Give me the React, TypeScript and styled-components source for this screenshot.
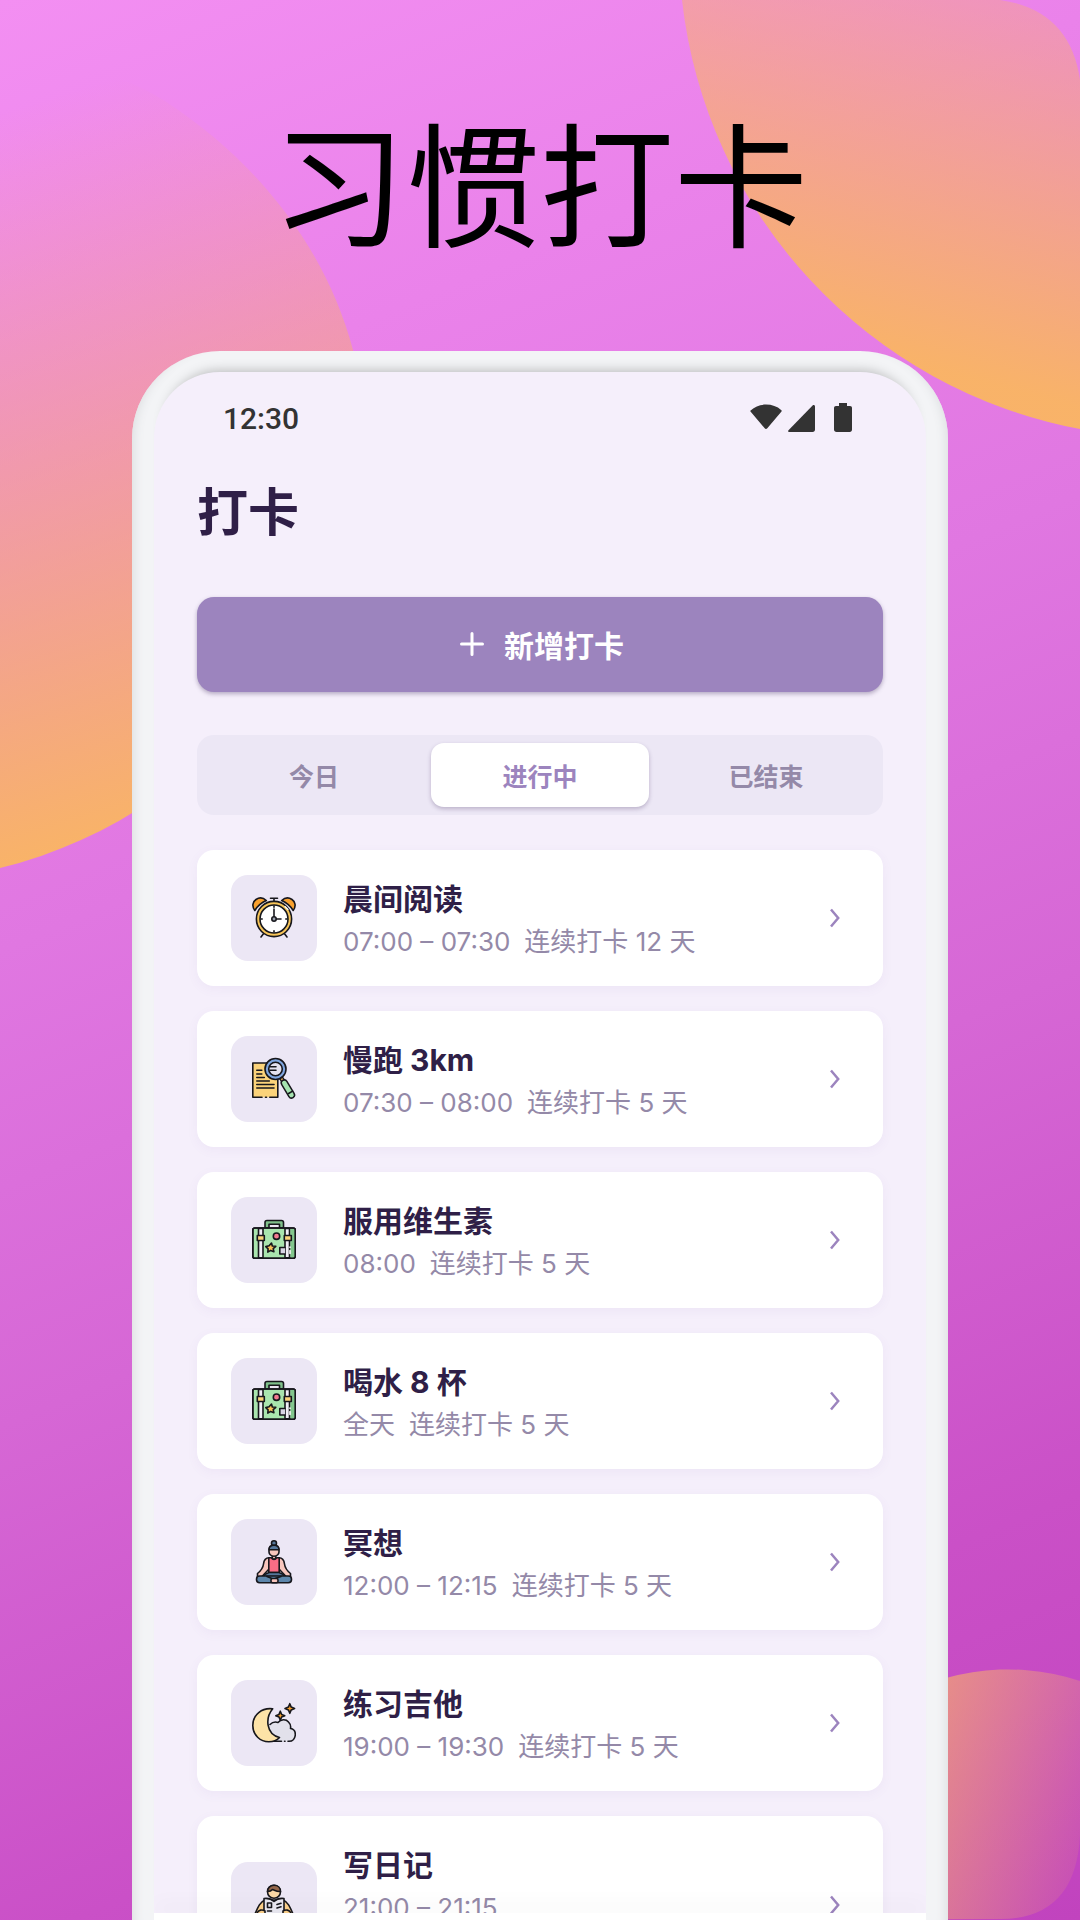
import React from "react";
import styled, { createGlobalStyle } from "styled-components";

const GlobalStyle = createGlobalStyle`
  * { box-sizing: border-box; }
  body {
    margin: 0;
    font-family: Inter, "Noto Sans CJK SC", sans-serif;
    color: #2f1f47;
  }
  button { font: inherit; border: 0; cursor: pointer; }
`;

const Page = styled.div`
  position: relative;
  height: 100vh;
  overflow: hidden;
  display: flex;
  flex-direction: column;
  align-items: center;
  background: linear-gradient(157deg, #f38ff2 0%, #ea82ea 20%, #e077e1 40%, #d667d5 60%, #ca50c7 82%, #c143be 100%);
`;

const Backdrop = styled.svg`
  position: absolute;
  inset: 0;
  width: 100%;
  height: 100%;
`;

const Headline = styled.h1`
  position: relative;
  margin: 0;
  padding: 99px 0 92px;
  font-family: "Noto Sans CJK SC", sans-serif;
  font-size: 134px;
  line-height: 160px;
  font-weight: 400;
  color: #000;
`;

const Phone = styled.div`
  position: relative;
  flex: 1;
  min-height: 0;
  width: 816px;
  max-width: 94%;
  padding: 21px 22px 0;
  display: flex;
  border-radius: 88px 88px 0 0;
  background: #f3f4f6;
  box-shadow: inset 12px 0 10px -9px #dfe1e3, inset -12px 0 10px -9px #dfe1e3;
`;

const Screen = styled.main`
  flex: 1;
  min-width: 0;
  display: flex;
  flex-direction: column;
  border-radius: 66px 66px 0 0;
  background: #f5effb;
  box-shadow: 0 -12px 12px -11px rgba(0, 0, 0, 0.25);
`;

const StatusBar = styled.div`
  flex: none;
  display: flex;
  align-items: center;
  justify-content: space-between;
  height: 94px;
  padding: 0 74px 2px 69px;
  font-family: Roboto, sans-serif;
  font-size: 30px;
  font-weight: 500;
  color: #333;
`;

const Content = styled.div`
  flex: 1;
  min-height: 0;
  overflow: hidden;
  padding: 13px 43px 0;
  display: flex;
  flex-direction: column;
`;

const Title = styled.h2`
  margin: 0 0 58px;
  font-family: "Noto Sans CJK SC", sans-serif;
  font-size: 51px;
  line-height: 60px;
  font-weight: 700;
`;

const AddButton = styled.button`
  flex: none;
  display: flex;
  align-items: center;
  justify-content: center;
  gap: 20px;
  height: 95px;
  padding: 0 0 2px 4px;
  margin-bottom: 43px;
  border-radius: 17px;
  background: #9c84be;
  color: #fff;
  font-size: 30px;
  font-weight: 700;
  box-shadow: 0 2px 4px rgba(60, 40, 90, 0.35);
`;

const Tabs = styled.div`
  flex: none;
  display: grid;
  grid-template-columns: repeat(3, 1fr);
  gap: 8px;
  height: 80px;
  padding: 8px;
  margin-bottom: 35px;
  border-radius: 17px;
  background: #ece7f5;
`;

const Tab = styled.button<{ $active?: boolean }>`
  padding: 0;
  border-radius: 13px;
  font-size: 25px;
  font-weight: 700;
  color: ${(p) => (p.$active ? "#9c84be" : "#9489a8")};
  background: ${(p) => (p.$active ? "#fff" : "transparent")};
  box-shadow: ${(p) => (p.$active ? "0 2px 4px rgba(60, 40, 90, 0.28)" : "none")};
`;

const List = styled.ul`
  margin: 0;
  padding: 0;
  list-style: none;
  display: flex;
  flex-direction: column;
  gap: 25px;
`;

const Card = styled.li<{ $tall?: boolean }>`
  flex: none;
  display: flex;
  align-items: center;
  height: ${(p) => (p.$tall ? 178 : 136)}px;
  padding: 0 43px 0 34px;
  border-radius: 17px;
  background: #fff;
  box-shadow: 0 3px 12px rgba(120, 90, 170, 0.06);
`;

const IconTile = styled.div`
  flex: none;
  display: flex;
  align-items: center;
  justify-content: center;
  width: 86px;
  height: 86px;
  margin-right: 26px;
  border-radius: 17px;
  background: #ece7f5;
`;

const Info = styled.div`
  flex: 1;
  min-width: 0;
  align-self: flex-start;
  padding-top: 28px;
`;

const Name = styled.h3`
  margin: 0;
  font-size: 30px;
  line-height: 42px;
  font-weight: 700;
`;

const Meta = styled.p`
  margin: 0;
  display: flex;
  gap: 14px;
  font-size: 26px;
  line-height: 44px;
  color: #9489a8;
`;

const BottomNav = styled.nav`
  position: relative;
  flex: none;
  height: 7px;
  background: #fff;
  box-shadow: 0 -8px 20px rgba(0, 0, 0, 0.05);
  clip-path: inset(-40px 0 0 0);
`;

const StatusIcons = () => (
  <svg width="102" height="30" viewBox="0 0 102 30" fill="#333" aria-hidden="true">
    <path d="M.6 7.400C5 3.400 10 1.600 16 1.600s11 1.800 15.400 5.600c.4.400.4.900.1 1.300L17.300 25.300c-.8.900-1.900.9-2.600 0L.5 8.600c-.3-.4-.3-.9.1-1.200z" />
    <path d="M38.500 27.200 62.600 2.500c.9-.9 2.400-.4 2.400 1V26.500c0 1.500-.9 2.500-2.400 2.500H39.400c-1.200 0-1.600-1-.9-1.800z" />
    <path d="M89 0h8v3h3c1.300 0 2 .8 2 2v21.500c0 1.500-.8 2.500-2.300 2.500H86.600c-1.600 0-2.600-1-2.600-2.500V5c0-1.200.8-2 2-2h3z" />
  </svg>
);

const PlusIcon = () => (
  <svg width="24" height="24" viewBox="0 0 24 24" fill="none" stroke="#fff" strokeWidth="3" strokeLinecap="round" aria-hidden="true">
    <path d="M12 1.500v21M1.500 12h21" />
  </svg>
);

const Chevron = () => (
  <svg width="10" height="20" viewBox="0 0 10 20" fill="none" stroke="#9c84be" strokeWidth="2.500" aria-hidden="true">
    <path d="M1 1.500 8.200 10 1 18.500" />
  </svg>
);

const Drawing = ({ children }: { children: React.ReactNode }) => (
  <svg width="44" height="44" viewBox="0 0 44 44" fill="none" stroke="#17171c" strokeWidth="1.600" strokeLinecap="round" strokeLinejoin="round" aria-hidden="true">
    {children}
  </svg>
);

const ClockArt = () => (
  <Drawing>
    <path d="M2.800 14.500C-.6 10 1 5.500 4 3.500 7.300 1.300 11.400 1.800 14.300 4.600 9.600 6.600 5.800 9.800 2.800 14.500z" fill="#f9a12e" />
    <path d="M41.200 14.500C44.600 10 43 5.500 40 3.500 36.700 1.300 32.600 1.800 29.700 4.600c4.700 2 8.500 5.200 11.500 9.900z" fill="#f9a12e" />
    <path d="M18.500 2.300h7M22 2.300v3M11.300 38l-2.300 3M32.700 38l2.300 3" />
    <circle cx="22" cy="23" r="17.600" fill="#f7c559" />
    <circle cx="22" cy="23" r="14" fill="#fff" />
    <path d="M22 20.500v-7.500M24.500 23H29M22 10v1.200M22 34.800V36M9 23h1.200M33.800 23H35" />
    <circle cx="22" cy="23" r="2.200" fill="#9aa0ad" />
    <path d="M33 10.500l3 3" stroke="#fff" strokeWidth="1.200" />
  </Drawing>
);

const SearchArt = () => (
  <Drawing>
    <path d="M.8 6h25v34.300h-25z" fill="#fbd37a" stroke="none" />
    <path d="M10 40.300H.8V6h25v34.300h-8M13.500 40.300h1" />
    <path d="M4.800 13.300h5M4.800 17h5M4.800 20.500h7.500M4.800 24h12.500M4.800 27.500H22M4.800 31H22" />
    <path d="M28.500 20l3 4.500" strokeWidth="4.500" />
    <path d="M28.800 20.500l2.500 3.800" stroke="#d9a253" strokeWidth="2" />
    <path d="M32.300 26l7.200 12" strokeWidth="7.500" />
    <path d="M32.300 26l7.200 12" stroke="#a5e3b0" strokeWidth="4.500" />
    <path d="M36.600 36.500l4-2.400" />
    <circle cx="23.500" cy="12" r="10.500" fill="#7fa6df" />
    <circle cx="23.500" cy="12" r="6.800" fill="#e4e2ef" />
    <path d="M18 9.800h6M18 13.300h6" />
  </Drawing>
);

const SuitcaseArt = () => (
  <Drawing>
    <path d="M13 10V4.500c0-1.200.7-2 2-2h14.500c1.200 0 2 .8 2 2V10h-4V6.300H17V10z" fill="#7fbf8a" />
    <rect x=".8" y="10" width="42.400" height="30.200" rx="2" fill="#a9e5ae" />
    <path d="M6.500 10.500v29.200h4.500V10.500zM33 10.500v29.200h4.500V10.500z" fill="#f1eff7" />
    <path d="M39 11v28.500h4V11z" fill="#83c78d" stroke="none" />
    <rect x=".8" y="10" width="42.400" height="30.200" rx="2" />
    <rect x="5.300" y="17.500" width="7" height="5" fill="#fbd37a" />
    <rect x="32.300" y="17.500" width="7" height="5" fill="#fbd37a" />
    <circle cx="24.500" cy="18.200" r="3.200" fill="#f4798f" />
    <path d="M19.500 25l.8 3 3.500.3-2.600 2.300.7 3.100-3.200-1.300-2.900 1.700.3-3.300-2.300-2.200 3.300-.8z" fill="#fbc25a" />
    <path d="M33 29.500h-5.200V36H33" fill="#d8d6e4" />
    <path d="M38 29v.5M38 32.500v3" stroke="#fff" />
  </Drawing>
);

const YogaArt = () => (
  <Drawing>
    <circle cx="22" cy="3.300" r="2.500" fill="#56789c" />
    <path d="M20.300 15h3.400v4h-3.400z" fill="#f8c6bd" />
    <path d="M17 10.500C17 7 19 5.300 22 5.300s5 1.700 5 5.200v1.500c0 2.300-2.300 4.300-5 4.300s-5-2-5-4.300z" fill="#f8c6bd" />
    <path d="M17 9.800C17 7 19 5.300 22 5.300s5 1.700 5 4.500z" fill="#56789c" />
    <path d="M17 17.800c-3.500 0-5 2.200-5.500 6.200-.5 4-2.500 6.700-6 9.500L5.500 37h4l7.500-8zM27 17.800c3.500 0 5 2.200 5.500 6.200.5 4 2.500 6.700 6 9.500v3.500h-4L27 29z" fill="#f8c6bd" />
    <path d="M16.800 17.800h2.700c1 2.200 4 2.200 5 0h2.700V32.500H16.800z" fill="#fa6d85" />
    <path d="M10.500 36.500C13 34 15.500 33 17 32.500h10c1.500.5 4 1.500 6.500 4z" fill="#56789c" />
    <rect x="4.500" y="36" width="35" height="6.800" rx="3.200" fill="#5d86ab" />
    <path d="M15 36.500l5 2M29 36.500l-6 2" />
    <rect x="19" y="38.500" width="7" height="4.300" rx="1.500" fill="#f8c6bd" />
  </Drawing>
);

const MoonArt = () => (
  <Drawing>
    <path d="M16 26c2-4 6-6 10-4.500 3-3.500 8-3.500 10.500-.5 2 2 2.500 4 2 6.500 3 .5 5 3 4.800 6.500-.3 3-2 5.500-4.800 6.300H20z" fill="#e2e1eb" stroke="none" />
    <path d="M18 23.500c2.500-2.500 5-3 8-2 3-3.500 8-3.500 10.500-.5 2 2 2.500 4 2 6.500 3 .5 5 3 4.800 6.500-.3 3.300-2.500 6.300-6.300 6.300h-1M32.500 40.300h.5M29.500 40.300H20" />
    <path d="M20.700 7.800C10 6.500.8 13.500.8 24.500c0 9.500 7.500 16.300 16 16.300 4 0 8-1.300 10.700-4.300C14 33.500 13 17 20.700 7.800z" fill="#fde3a7" />
    <path d="M28.300 10.200l1.300 3.200 3.200 1.300-3.200 1.300-1.300 3.200-1.300-3.200-3.200-1.300 3.200-1.300zM37.800 2.700l1.400 3.400 3.400 1.400-3.400 1.400-1.400 3.400-1.400-3.400L33 7.500l3.400-1.400z" fill="#f9a12e" />
  </Drawing>
);

const ReaderArt = () => (
  <Drawing>
    <path d="M13 17C8 19 6 24 3 31h38c-3-7-5-12-10-14z" fill="#fbd08a" />
    <circle cx="22" cy="8.800" r="6.500" fill="#fbd8a6" />
    <path d="M15.500 8.500C15.500 5 18 2.300 22 2.300s6.500 2.700 6.500 6.200c-4 .5-6-1.500-8-2-1 1.200-3 2-5 2z" fill="#94674a" />
    <path d="M12 15.500c4-.5 8 1 10 3 2-2 6-3.500 10-3V36c-4-.5-8 .5-10 2-2-1.500-6-2.500-10-2z" fill="#e8e7f0" />
    <path d="M15.500 20h4v4.500h-4zM25 21.500l4-1.200M25 25l4-1.200M15.500 28h4" />
    <path d="M5 30c1.500-3 5-4 8-2v8H5zM39 30c-1.500-3-5-4-8-2v8h8z" fill="#fbd08a" />
  </Drawing>
);

const habits = [
  { name: "晨间阅读", time: "07:00 – 07:30", streak: "连续打卡 12 天", Art: ClockArt },
  { name: "慢跑 3km", time: "07:30 – 08:00", streak: "连续打卡 5 天", Art: SearchArt },
  { name: "服用维生素", time: "08:00", streak: "连续打卡 5 天", Art: SuitcaseArt },
  { name: "喝水 8 杯", time: "全天", streak: "连续打卡 5 天", Art: SuitcaseArt },
  { name: "冥想", time: "12:00 – 12:15", streak: "连续打卡 5 天", Art: YogaArt },
  { name: "练习吉他", time: "19:00 – 19:30", streak: "连续打卡 5 天", Art: MoonArt },
  { name: "写日记", time: "21:00 – 21:15", Art: ReaderArt, tall: true },
];

const BackdropArt = () => (
  <Backdrop viewBox="0 0 1080 1920" preserveAspectRatio="none" aria-hidden="true">
    <defs>
      <linearGradient id="left" gradientUnits="userSpaceOnUse" x1="10" y1="110" x2="220" y2="800">
        <stop offset="0" stopColor="#f9b466" stopOpacity="0" />
        <stop offset="1" stopColor="#f9b466" stopOpacity="0.980" />
      </linearGradient>
      <linearGradient id="right" gradientUnits="userSpaceOnUse" x1="1050" y1="-200" x2="900" y2="360">
        <stop offset="0" stopColor="#f9b466" stopOpacity="0" />
        <stop offset="1" stopColor="#f9b466" stopOpacity="0.980" />
      </linearGradient>
      <linearGradient id="corner" gradientUnits="userSpaceOnUse" x1="860" y1="1690" x2="1120" y2="1770">
        <stop offset="0" stopColor="#f9b466" stopOpacity="0.850" />
        <stop offset="1" stopColor="#f9b466" stopOpacity="0.080" />
      </linearGradient>
    </defs>
    <path d="M0 60C60 60 115 70 165 101C255 160 325 245 353 350A469 469 0 0 1 0 868Z" fill="url(#left)" />
    <path d="M682 0A492 492 0 0 0 1080 429V80Q1070 10 1000 0Z" fill="url(#right)" />
    <path d="M778 1900A230 230 0 0 1 1080 1681V1835Q1076 1919 1000 1919L778 1920Z" fill="url(#corner)" />
  </Backdrop>
);

export default function App() {
  return (
    <Page>
      <GlobalStyle />
      <BackdropArt />
      <Headline>习惯打卡</Headline>
      <Phone>
        <Screen>
          <StatusBar>
            <span>12:30</span>
            <StatusIcons />
          </StatusBar>
          <Content>
            <Title>打卡</Title>
            <AddButton type="button">
              <PlusIcon />
              新增打卡
            </AddButton>
            <Tabs role="tablist">
              <Tab type="button" role="tab" aria-selected={false}>今日</Tab>
              <Tab type="button" role="tab" aria-selected $active>进行中</Tab>
              <Tab type="button" role="tab" aria-selected={false}>已结束</Tab>
            </Tabs>
            <List>
              {habits.map(({ name, time, streak, Art, tall }) => (
                <Card key={name} $tall={tall}>
                  <IconTile><Art /></IconTile>
                  <Info>
                    <Name>{name}</Name>
                    <Meta>
                      <span>{time}</span>
                      {streak && <span>{streak}</span>}
                    </Meta>
                  </Info>
                  <Chevron />
                </Card>
              ))}
            </List>
          </Content>
          <BottomNav />
        </Screen>
      </Phone>
    </Page>
  );
}
